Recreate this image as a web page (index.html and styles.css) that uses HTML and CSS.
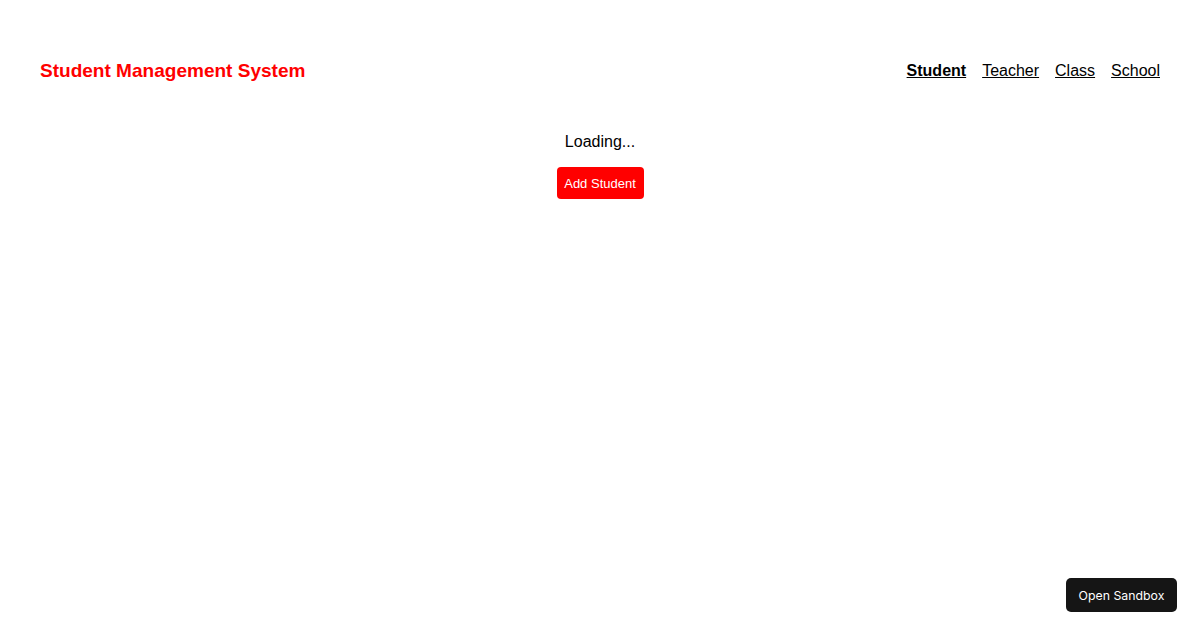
FILE: index.html
```html
<!DOCTYPE html>
<html>
<head>
<meta charset="utf-8">
<link rel="stylesheet" href="styles.css">
</head>
<body>
<header class="header">
  <h1 class="brand">Student Management System</h1>
  <nav class="nav">
    <a class="nav-link active" href="#">Student</a>
    <a class="nav-link" href="#">Teacher</a>
    <a class="nav-link" href="#">Class</a>
    <a class="nav-link" href="#">School</a>
  </nav>
</header>
<main class="main">
  <p class="loading">Loading...</p>
  <button class="add-btn">Add Student</button>
</main>
<button class="sandbox-btn">Open Sandbox</button>
</body>
</html>
```
FILE: styles.css
```css
html, body {
  margin: 0;
  padding: 0;
  background: #fff;
  font-family: "Liberation Sans", Arial, sans-serif;
  color: #000;
}
.header {
  display: flex;
  justify-content: space-between;
  align-items: center;
  padding: 59px 40px 0 40px;
  height: 24px;
}
.brand {
  margin: 0;
  font-size: 19.05px;
  font-weight: bold;
  color: #ff0000;
}
.nav {
  display: flex;
  gap: 16px;
}
.nav-link {
  font-size: 16px;
  color: #000;
  text-decoration: underline;
}
.nav-link.active {
  font-weight: bold;
}
.main {
  display: flex;
  flex-direction: column;
  align-items: center;
  padding-top: 50px;
}
.loading {
  margin: 0;
  font-size: 16px;
  line-height: 18px;
}
.add-btn {
  margin-top: 16px;
  width: 87px;
  height: 32px;
  border: none;
  border-radius: 4px;
  background: #ff0000;
  color: #fff;
  font-family: "Liberation Sans", Arial, sans-serif;
  font-size: 13px;
  padding: 0;
}
.sandbox-btn {
  position: fixed;
  right: 23px;
  bottom: 18px;
  width: 111px;
  height: 34px;
  border: none;
  border-radius: 5px;
  background: #151515;
  color: #fff;
  font-family: Inter, "Liberation Sans", sans-serif;
  font-size: 12.3px;
  padding: 0;
}
```
